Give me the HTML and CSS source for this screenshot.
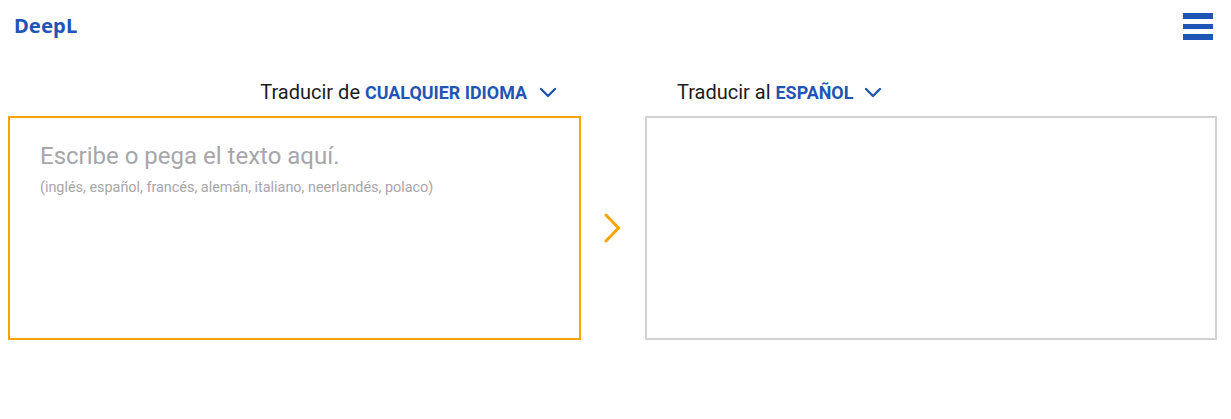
FILE: index.html
```html
<!DOCTYPE html>
<html lang="es">
<head>
<meta charset="utf-8">
<title>DeepL</title>
<link rel="stylesheet" href="styles.css">
</head>
<body>
<header class="top">
  <span class="logo">DeepL</span>
  <span class="burger"><i></i><i></i><i></i></span>
</header>
<main class="translator">
  <section class="side">
    <div class="lang lang-source">
      <span>Traducir de <b>CUALQUIER IDIOMA</b></span>
      <svg class="chev" width="18" height="11" viewBox="0 0 18 11"><path d="M2 2l7 7 7-7" fill="none" stroke="#1f55b4" stroke-width="2.4" stroke-linecap="round" stroke-linejoin="round"/></svg>
    </div>
    <div class="box box-source">
      <div class="ph">Escribe o pega el texto aquí.</div>
      <div class="ph-sub">(inglés, español, francés, alemán, italiano, neerlandés, polaco)</div>
    </div>
  </section>
  <div class="arrow">
    <svg width="18" height="30" viewBox="0 0 18 30"><path d="M2 2l12.5 13L2 28" fill="none" stroke="#f9a400" stroke-width="3" stroke-linecap="round" stroke-linejoin="miter"/></svg>
  </div>
  <section class="side">
    <div class="lang lang-target">
      <span>Traducir al <b>ESPAÑOL</b></span>
      <svg class="chev" width="18" height="11" viewBox="0 0 18 11"><path d="M2 2l7 7 7-7" fill="none" stroke="#1f55b4" stroke-width="2.4" stroke-linecap="round" stroke-linejoin="round"/></svg>
    </div>
    <div class="box box-target"></div>
  </section>
</main>
</body>
</html>
```
FILE: styles.css
```css
html, body { margin: 0; padding: 0; background: #fff; }
body { font-family: Roboto, sans-serif; height: 419px; overflow: hidden; }
.top {
  display: flex;
  justify-content: space-between;
  align-items: flex-start;
  height: 78px;
  padding: 12px 18px 0 14px;
  box-sizing: border-box;
}
.logo {
  font-family: "Noto Sans", sans-serif;
  font-weight: 700;
  font-size: 20.3px;
  line-height: 27px;
  color: #1f55b4;
}
.burger { display: flex; flex-direction: column; gap: 5px; padding-top: 1px; }
.burger i { display: block; width: 30px; height: 5.5px; background: #1f55b4; }
.translator {
  display: grid;
  grid-template-columns: 573px 64px 572px;
  padding: 0 14px 0 8px;
}
.side { display: flex; flex-direction: column; }
.lang {
  display: flex;
  align-items: center;
  height: 38px;
  padding-bottom: 10px;
  box-sizing: border-box;
  font-size: 20px;
  color: #1c1c1c;
  white-space: nowrap;
}
.lang b { font-weight: 700; font-size: 17.9px; color: #1f55b4; }
.lang-source { justify-content: flex-end; padding-right: 24px; }
.lang-target { padding-left: 32px; }
.chev { margin-left: 11px; }
.lang-source .chev { margin-left: 12px; }
.box { height: 224px; box-sizing: border-box; border: 2px solid; }
.box-source { border-color: #f9a400; padding: 23px 30px; }
.box-target { border-color: #d2d2d2; }
.ph { font-size: 24px; line-height: 30px; color: #a6a6ab; }
.ph-sub { font-size: 14.4px; line-height: 18px; margin-top: 8px; color: #a6a6ab; }
.arrow { display: flex; justify-content: center; align-items: center; padding-top: 38px; height: 262px; box-sizing: border-box; }
```
